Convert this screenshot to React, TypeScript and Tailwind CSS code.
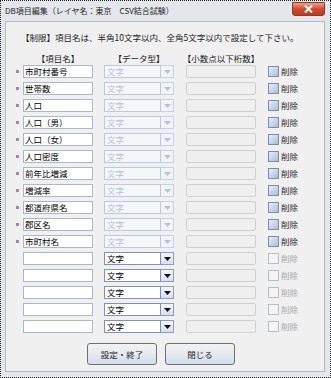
import React from "react";

const filled = [
  "市町村番号",
  "世帯数",
  "人口",
  "人口（男）",
  "人口（女）",
  "人口密度",
  "前年比増減",
  "増減率",
  "都道府県名",
  "郡区名",
  "市町村名",
];

const rows = [...filled.map((n) => ({ name: n, fixed: true })), ...Array.from({ length: 5 }, () => ({ name: "", fixed: false }))];

function Arrow({ color }: { color: string }) {
  return (
    <svg width="7" height="4" viewBox="0 0 7 4">
      <path d="M0 0 H7 L3.5 4 Z" fill={color} />
    </svg>
  );
}

function Row({ name, fixed }: { name: string; fixed: boolean }) {
  return (
    <div className="flex items-center h-[13px]">
      <div className="w-[9px] flex items-center justify-start pl-[2px]">
        {fixed && <span className="w-[3px] h-[3px] bg-[#a487b0]" />}
      </div>
      <div className="w-[70px] h-[13px] border border-[#a9b7c9] bg-white flex items-center px-[1px] text-[8.5px] leading-none text-black whitespace-nowrap">
        {name}
      </div>

      {fixed ? (
        <div className="ml-[11px] w-[70px] h-[13px] flex">
          <div className="flex-1 border border-[#b9c9e3] bg-[#f5f6f8] flex items-center px-[2px] text-[8.5px] leading-none text-[#b4c3dc]">
            文字
          </div>
          <div className="w-[13px] border border-l-0 border-[#c5d2e6] bg-[#f1f3f6] flex items-center justify-center">
            <Arrow color="#b3c2dd" />
          </div>
        </div>
      ) : (
        <div className="ml-[11px] w-[70px] h-[13px] flex">
          <div className="flex-1 border border-[#7f91b8] bg-white flex items-center px-[2px] text-[8.5px] leading-none text-black">
            文字
          </div>
          <div className="w-[13px] border border-l-0 border-[#8a9cc2] bg-gradient-to-b from-[#f4f6fb] to-[#d8dfec] flex items-center justify-center">
            <Arrow color="#111" />
          </div>
        </div>
      )}

      <div className="ml-[12px] w-[70px] h-[13px] border border-[#cfcfcf] rounded-[2px] bg-[#efefef]" />

      <div className="ml-[12px] flex items-center gap-[2px]">
        {fixed ? (
          <span className="w-[11px] h-[11px] border border-[#7b8ca8] bg-gradient-to-br from-[#e8eef8] to-[#a9bedb]" />
        ) : (
          <span className="w-[11px] h-[11px] border border-[#b8bcc4] bg-[#f4f4f4]" />
        )}
        <span className={`text-[8.5px] leading-none ${fixed ? "text-[#2a2a2a]" : "text-[#a8a8a8]"}`}>削除</span>
      </div>
    </div>
  );
}

export default function App() {
  return (
    <div
      className="w-[331px] h-[378px] border border-dotted border-[#222] bg-[#e3e6ea] flex flex-col"
      style={{ fontFamily: '"Noto Sans CJK JP", "Noto Sans", sans-serif' }}
    >
      {/* title bar */}
      <div className="h-[20px] flex items-start justify-between pl-[4px] pr-[5px]">
        <span className="mt-[4px] text-[8px] leading-[12px] text-[#1f1f1f] whitespace-nowrap">
          DB項目編集（レイヤ名：東京　CSV結合試験）
        </span>
        <div className="mt-[1px] w-[33px] h-[14px] rounded-b-[3px] border border-[#8a3a2a] bg-gradient-to-b from-[#e9a08e] via-[#d1482d] to-[#c0391f] flex items-center justify-center">
          <svg width="9" height="8" viewBox="0 0 9 8">
            <path d="M1 0.5 L8 7.5 M8 0.5 L1 7.5" stroke="#fff" strokeWidth="2" />
          </svg>
        </div>
      </div>

      {/* panel */}
      <div className="ml-[4px] mr-[5px] mb-[5px] flex-1 border border-[#b4b8bd] bg-[#f0f0f0] flex flex-col pt-[9px] pl-[2px]">
        <div className="pl-[13px] text-[8.5px] leading-[12px] text-[#1c1c1c] whitespace-nowrap">
          【制限】項目名は、半角10文字以内、全角5文字以内で設定して下さい。
        </div>

        <div className="mt-[9px] flex text-[8.5px] leading-[12px] text-[#1c1c1c] whitespace-nowrap">
          <span className="w-[15px] shrink-0" />
          <span className="w-[70px] shrink-0 text-center">【項目名】</span>
          <span className="ml-[11px] w-[70px] shrink-0 text-center">【データ型】</span>
          <span className="ml-[12px] w-[70px] shrink-0 flex justify-center">【小数点以下桁数】</span>
        </div>

        <div className="mt-[1px] pl-[6px] flex flex-col gap-[4px]">
          {rows.map((r, i) => (
            <Row key={i} name={r.name} fixed={r.fixed} />
          ))}
        </div>

        <div className="mt-[10px] flex justify-center gap-[8px] pr-[10px]">
          <button className="w-[70px] h-[22px] rounded-[3px] border border-[#707070] bg-gradient-to-b from-[#f2f2f2] via-[#e6e9ee] to-[#cfdef0] text-[8.5px] text-[#1c1c1c]">
            設定・終了
          </button>
          <button className="w-[70px] h-[22px] rounded-[3px] border border-[#707070] bg-gradient-to-b from-[#f2f2f2] via-[#e6e9ee] to-[#cfdef0] text-[8.5px] text-[#1c1c1c]">
            閉じる
          </button>
        </div>
      </div>
    </div>
  );
}
